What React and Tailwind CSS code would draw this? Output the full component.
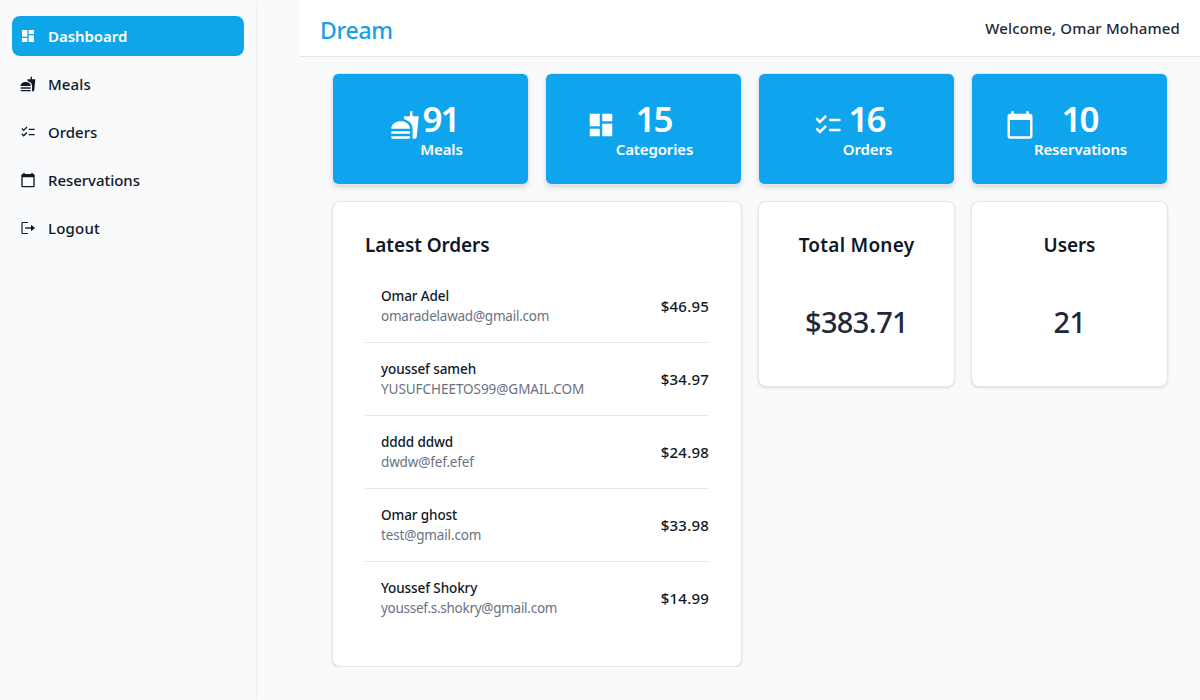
import { MdDashboard, MdFastfood, MdChecklist, MdCalendarToday } from "react-icons/md";

function LogoutIcon({ size }) {
  return (
    <svg width={size} height={size} viewBox="0 0 16 16" fill="none">
      <path d="M8 2.5H2.8Q2 2.5 2 3.3V12.7Q2 13.5 2.8 13.5H8" stroke="currentColor" strokeWidth="1.2" />
      <path d="M5.2 8H12" stroke="currentColor" strokeWidth="1.4" />
      <path d="M11 4.8L15 8L11 11.2Z" fill="currentColor" />
    </svg>
  );
}

const nav = [
  { label: "Meals", Icon: MdFastfood, tracking: "tracking-[0.1px]" },
  { label: "Orders", Icon: MdChecklist, tracking: "tracking-[0px]" },
  { label: "Reservations", Icon: MdCalendarToday, tracking: "tracking-[-0.05px]" },
  { label: "Logout", Icon: LogoutIcon, tracking: "tracking-[0.2px]" },
];

const stats = [
  { label: "Meals", value: 91, Icon: MdFastfood, width: "w-[43px]" },
  { label: "Categories", value: 15, Icon: MdDashboard, width: "w-[77px]" },
  { label: "Orders", value: 16, Icon: MdChecklist, width: "w-[49px]" },
  { label: "Reservations", value: 10, Icon: MdCalendarToday, width: "w-[92px]" },
];

const orders = [
  { name: "Omar Adel", email: "omaradelawad@gmail.com", total: "$46.95", tracking: "tracking-[-0.23px]" },
  { name: "youssef sameh", email: "YUSUFCHEETOS99@GMAIL.COM", total: "$34.97", tracking: "tracking-[-0.05px]" },
  { name: "dddd ddwd", email: "dwdw@fef.efef", total: "$24.98", tracking: "tracking-[-0.15px]" },
  { name: "Omar ghost", email: "test@gmail.com", total: "$33.98", tracking: "tracking-[-0.15px]" },
  { name: "Youssef Shokry", email: "youssef.s.shokry@gmail.com", total: "$14.99", tracking: "tracking-[-0.27px]" },
];

function Sidebar() {
  return (
    <aside className="w-64 shrink-0 px-3 py-4 shadow">
      <nav className="flex flex-col gap-2">
        <a className="flex h-10 items-center rounded-lg bg-[#0ea5e9] px-2 font-semibold text-white">
          <MdDashboard size={16} />
          <span className="ml-3 text-[15px] tracking-[-0.05px]">Dashboard</span>
        </a>
        {nav.map(({ label, Icon, tracking }) => (
          <a key={label} className="flex h-10 items-center px-2 font-medium text-gray-900">
            <Icon size={16} />
            <span className={`ml-3 text-[15px] ${tracking}`}>{label}</span>
          </a>
        ))}
      </nav>
    </aside>
  );
}

function StatCard({ label, value, Icon, width }) {
  return (
    <div className="flex h-28 items-center justify-center rounded-md border border-gray-200 bg-[#0fa5ee] bg-clip-padding pr-2 text-white shadow-md">
      <Icon size={30} className="mt-[-8px] shrink-0" />
      <div className={`${width} flex flex-col items-center font-semibold`}>
        <span className="pr-0.5 text-[35px] leading-10 tracking-[-2px]">{value}</span>
        <span className="text-[15px] leading-5 tracking-[-0.12px]">{label}</span>
      </div>
    </div>
  );
}

function TotalCard({ title, value, tracking }) {
  return (
    <div className="flex h-[186px] flex-col items-center rounded-lg border border-gray-200 bg-white pt-[27px] shadow">
      <h2 className={`text-[19px] leading-8 font-semibold text-gray-900 ${tracking}`}>{title}</h2>
      <p className="mt-[41px] text-[29px] leading-10 font-medium tracking-[-0.6px] text-gray-800">{value}</p>
    </div>
  );
}

export default function App() {
  return (
    <div className="flex h-[700px] w-[1200px] overflow-hidden bg-[#f9fafc] font-['Noto_Sans','Open_Sans',sans-serif]">
      <Sidebar />
      <div className="ml-11 flex-1">
        <header className="flex h-[57px] items-center justify-between border-b border-gray-200 bg-white px-5 font-medium">
          <h1 className="pt-1 text-[23px] tracking-[-0.3px] text-[#1a9fe8]">Dream</h1>
          <p className="text-[15px] tracking-[0.15px] text-gray-800">Welcome, Omar Mohamed</p>
        </header>
        <main className="h-[610px] overflow-hidden px-8 pt-4">
          <div className="grid grid-cols-4 items-start gap-4">
            {stats.map((s) => (
              <StatCard key={s.label} {...s} />
            ))}
            <section className="col-span-2 h-[466px] rounded-lg border border-gray-200 bg-white px-8 pt-[27px] shadow">
              <h2 className="text-[19px] leading-8 font-semibold tracking-[-0.1px] text-gray-900">Latest Orders</h2>
              <ul className="mt-[9px] divide-y divide-gray-200">
                {orders.map((o) => (
                  <li key={o.name} className="flex h-[73px] items-center justify-between pl-4 font-medium last:h-[72px]">
                    <div className="text-[13.5px] leading-5">
                      <p className="tracking-[-0.1px] text-gray-900">{o.name}</p>
                      <p className={`font-normal text-gray-500 ${o.tracking}`}>{o.email}</p>
                    </div>
                    <span className="text-[15px] tracking-[0.2px] text-gray-900">{o.total}</span>
                  </li>
                ))}
              </ul>
            </section>
            <TotalCard title="Total Money" value="$383.71" tracking="tracking-[0.25px]" />
            <TotalCard title="Users" value="21" tracking="tracking-[-0.1px]" />
          </div>
        </main>
      </div>
    </div>
  );
}
